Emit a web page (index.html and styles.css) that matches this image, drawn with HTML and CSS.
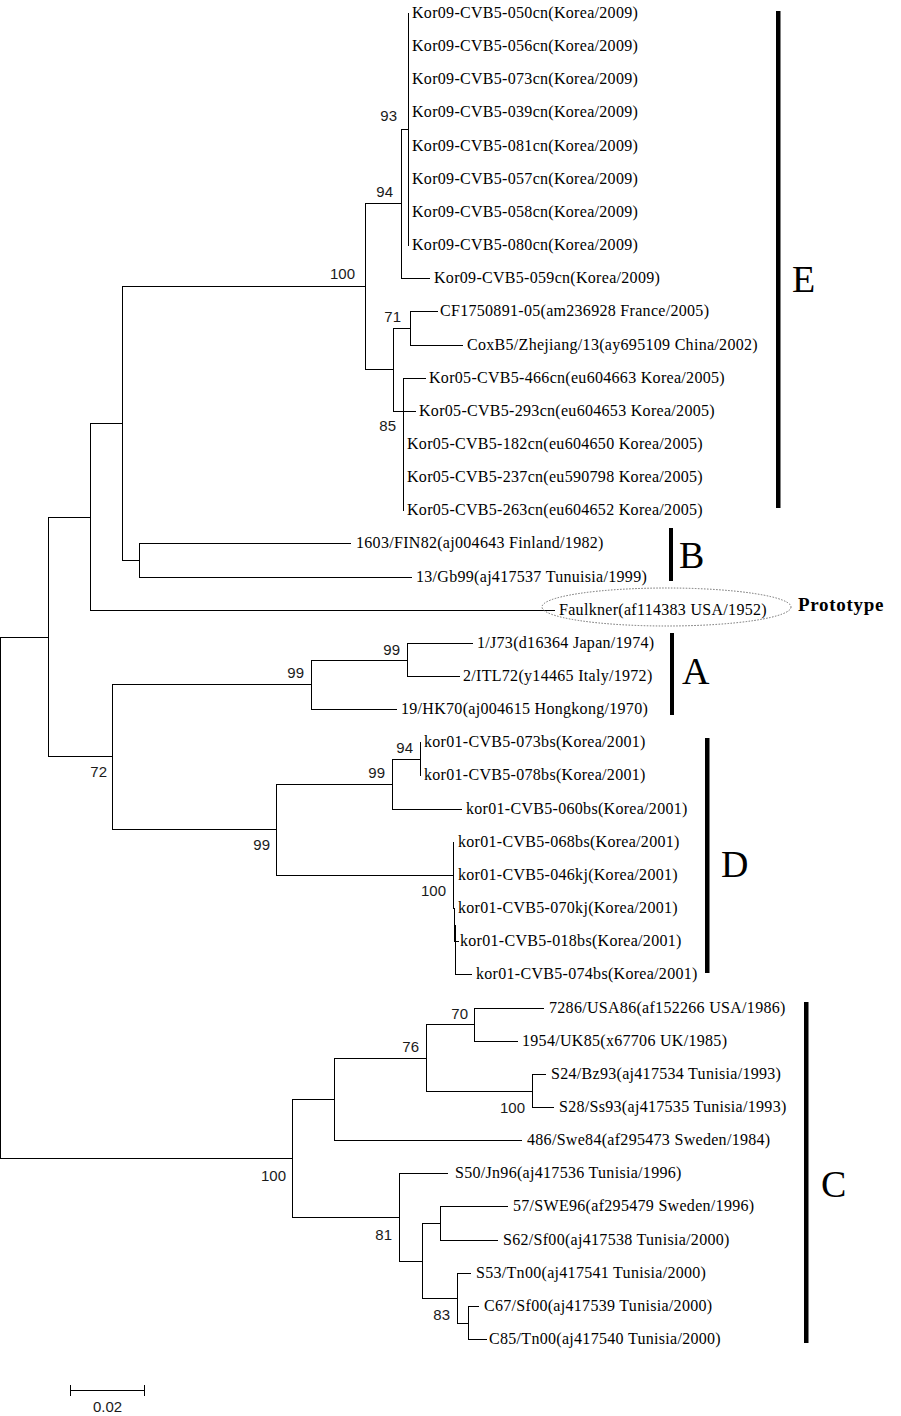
FILE: index.html
```html
<!DOCTYPE html>
<html lang="en">
<head>
<meta charset="utf-8">
<title>CVB5 phylogenetic tree</title>
<link rel="stylesheet" href="styles.css">
</head>
<body>
<svg class="tree" width="901" height="1416" viewBox="0 0 901 1416" xmlns="http://www.w3.org/2000/svg">
  <path class="branches" d="
M0.5 637V1159 M0 637.5H49 M0 1158.5H293
M48.5 517V757 M48 517.5H91 M48 756.5H113
M90.5 423V611 M90 423.5H123 M90 610.5H555
M122.5 286V561 M122 286.5H366 M122 560.5H140
M139.5 543V578 M139 543.5H351 M139 577.5H412
M365.5 203V370 M365 203.5H402 M365 369.5H394
M401.5 129V279 M401 129.5H409 M401 278.5H430
M408.5 13V246
M393.5 328V412 M393 328.5H411 M393 411.5H416
M410.5 311V346 M410 311.5H438 M410 345.5H463
M403.5 378V511 M403 378.5H426
M112.5 684V830 M112 684.5H312 M112 829.5H277
M311.5 660V710 M311 660.5H408 M311 709.5H397
M407.5 643V677 M407 643.5H473 M407 676.5H460
M276.5 784V876 M276 784.5H393 M276 875.5H454
M392.5 759V810 M392 759.5H421 M392 809.5H462
M420.5 742V776
M453.5 842V909 M454.5 908V942 M455.5 925V975 M454 941.5H459 M455 974.5H472
M292.5 1099V1218 M292 1099.5H335 M292 1217.5H400
M334.5 1058V1141 M334 1058.5H427 M334 1140.5H522
M426.5 1024V1092 M426 1024.5H475 M426 1091.5H533
M474.5 1008V1042 M474 1008.5H544 M474 1041.5H518
M532.5 1074V1108 M532 1074.5H546 M532 1107.5H554
M399.5 1173V1262 M399 1173.5H448 M399 1261.5H423
M422.5 1223V1299 M422 1223.5H441 M422 1298.5H458
M440.5 1206V1241 M440 1206.5H508 M440 1240.5H498
M457.5 1273V1324 M457 1273.5H471 M457 1323.5H469
M468.5 1306V1340 M468 1306.5H479 M468 1339.5H487
M70 1390.5H145 M70.5 1385V1396 M144.5 1385V1396"/>

  <ellipse class="proto-ring" cx="666.5" cy="607" rx="124.5" ry="19"/>

  <g class="leaf">
    <text x="412" y="18">Kor09-CVB5-050cn(Korea/2009)</text>
    <text x="412" y="51">Kor09-CVB5-056cn(Korea/2009)</text>
    <text x="412" y="84">Kor09-CVB5-073cn(Korea/2009)</text>
    <text x="412" y="117">Kor09-CVB5-039cn(Korea/2009)</text>
    <text x="412" y="151">Kor09-CVB5-081cn(Korea/2009)</text>
    <text x="412" y="184">Kor09-CVB5-057cn(Korea/2009)</text>
    <text x="412" y="217">Kor09-CVB5-058cn(Korea/2009)</text>
    <text x="412" y="250">Kor09-CVB5-080cn(Korea/2009)</text>
    <text x="434" y="283">Kor09-CVB5-059cn(Korea/2009)</text>
    <text x="440" y="316">CF1750891-05(am236928 France/2005)</text>
    <text x="467" y="350">CoxB5/Zhejiang/13(ay695109 China/2002)</text>
    <text x="429" y="383">Kor05-CVB5-466cn(eu604663 Korea/2005)</text>
    <text x="419" y="416">Kor05-CVB5-293cn(eu604653 Korea/2005)</text>
    <text x="407" y="449">Kor05-CVB5-182cn(eu604650 Korea/2005)</text>
    <text x="407" y="482">Kor05-CVB5-237cn(eu590798 Korea/2005)</text>
    <text x="407" y="515">Kor05-CVB5-263cn(eu604652 Korea/2005)</text>
    <text x="356" y="548">1603/FIN82(aj004643 Finland/1982)</text>
    <text x="416" y="582">13/Gb99(aj417537 Tunuisia/1999)</text>
    <text x="559" y="615">Faulkner(af114383 USA/1952)</text>
    <text x="477" y="648">1/J73(d16364 Japan/1974)</text>
    <text x="463" y="681">2/ITL72(y14465 Italy/1972)</text>
    <text x="401" y="714">19/HK70(aj004615 Hongkong/1970)</text>
    <text x="424" y="747">kor01-CVB5-073bs(Korea/2001)</text>
    <text x="424" y="780">kor01-CVB5-078bs(Korea/2001)</text>
    <text x="466" y="814">kor01-CVB5-060bs(Korea/2001)</text>
    <text x="458" y="847">kor01-CVB5-068bs(Korea/2001)</text>
    <text x="458" y="880">kor01-CVB5-046kj(Korea/2001)</text>
    <text x="458" y="913">kor01-CVB5-070kj(Korea/2001)</text>
    <text x="460" y="946">kor01-CVB5-018bs(Korea/2001)</text>
    <text x="476" y="979">kor01-CVB5-074bs(Korea/2001)</text>
    <text x="549" y="1013">7286/USA86(af152266 USA/1986)</text>
    <text x="522" y="1046">1954/UK85(x67706 UK/1985)</text>
    <text x="551" y="1079">S24/Bz93(aj417534 Tunisia/1993)</text>
    <text x="559" y="1112">S28/Ss93(aj417535 Tunisia/1993)</text>
    <text x="527" y="1145">486/Swe84(af295473 Sweden/1984)</text>
    <text x="455" y="1178">S50/Jn96(aj417536 Tunisia/1996)</text>
    <text x="513" y="1211">57/SWE96(af295479 Sweden/1996)</text>
    <text x="503" y="1245">S62/Sf00(aj417538 Tunisia/2000)</text>
    <text x="476" y="1278">S53/Tn00(aj417541 Tunisia/2000)</text>
    <text x="484" y="1311">C67/Sf00(aj417539 Tunisia/2000)</text>
    <text x="489" y="1344">C85/Tn00(aj417540 Tunisia/2000)</text>
  </g>

  <g class="boot">
    <text x="397" y="121">93</text>
    <text x="393" y="197">94</text>
    <text x="355" y="279">100</text>
    <text x="401" y="322">71</text>
    <text x="396" y="431">85</text>
    <text x="400" y="655">99</text>
    <text x="304" y="678">99</text>
    <text x="107" y="777">72</text>
    <text x="413" y="753">94</text>
    <text x="385" y="778">99</text>
    <text x="270" y="850">99</text>
    <text x="446" y="896">100</text>
    <text x="468" y="1019">70</text>
    <text x="419" y="1052">76</text>
    <text x="525" y="1113">100</text>
    <text x="286" y="1181">100</text>
    <text x="392" y="1240">81</text>
    <text x="450" y="1320">83</text>
  </g>

  <g class="bars">
    <rect x="776" y="11" width="4.5" height="497"/>
    <rect x="669" y="528" width="4" height="53"/>
    <rect x="670" y="633" width="4" height="82"/>
    <rect x="705" y="738" width="4.5" height="235"/>
    <rect x="804" y="1002" width="4.5" height="341"/>
  </g>

  <g class="clade">
    <text x="792" y="292">E</text>
    <text x="679" y="568">B</text>
    <text x="682" y="684">A</text>
    <text x="721" y="877">D</text>
    <text x="821" y="1197">C</text>
  </g>

  <text class="proto" x="798" y="611">Prototype</text>
  <text class="scale" x="93" y="1412">0.02</text>
</svg>
</body>
</html>
```

FILE: styles.css
```css
html, body {
  margin: 0;
  padding: 0;
  background: #ffffff;
}

.tree {
  display: block;
  background: #ffffff;
}

.branches {
  fill: none;
  stroke: #000000;
  stroke-width: 1;
  shape-rendering: crispEdges;
}

.proto-ring {
  fill: none;
  stroke: #6e6e6e;
  stroke-width: 1;
  stroke-dasharray: 1.5 1.5;
}

.leaf text {
  font-family: "Liberation Serif", "Times New Roman", serif;
  font-size: 16px;
  letter-spacing: 0.3px;
  fill: #000000;
}

.boot text {
  font-family: "Liberation Sans", Arial, sans-serif;
  font-size: 15px;
  text-anchor: end;
  fill: #1a1a1a;
}

.bars rect {
  fill: #000000;
}

.clade text {
  font-family: "Liberation Serif", "Times New Roman", serif;
  font-size: 38px;
  fill: #000000;
}

.proto {
  font-family: "Liberation Serif", "Times New Roman", serif;
  font-size: 19px;
  font-weight: bold;
  letter-spacing: 0.7px;
  fill: #000000;
}

.scale {
  font-family: "Liberation Sans", Arial, sans-serif;
  font-size: 15px;
  fill: #1a1a1a;
}
```
